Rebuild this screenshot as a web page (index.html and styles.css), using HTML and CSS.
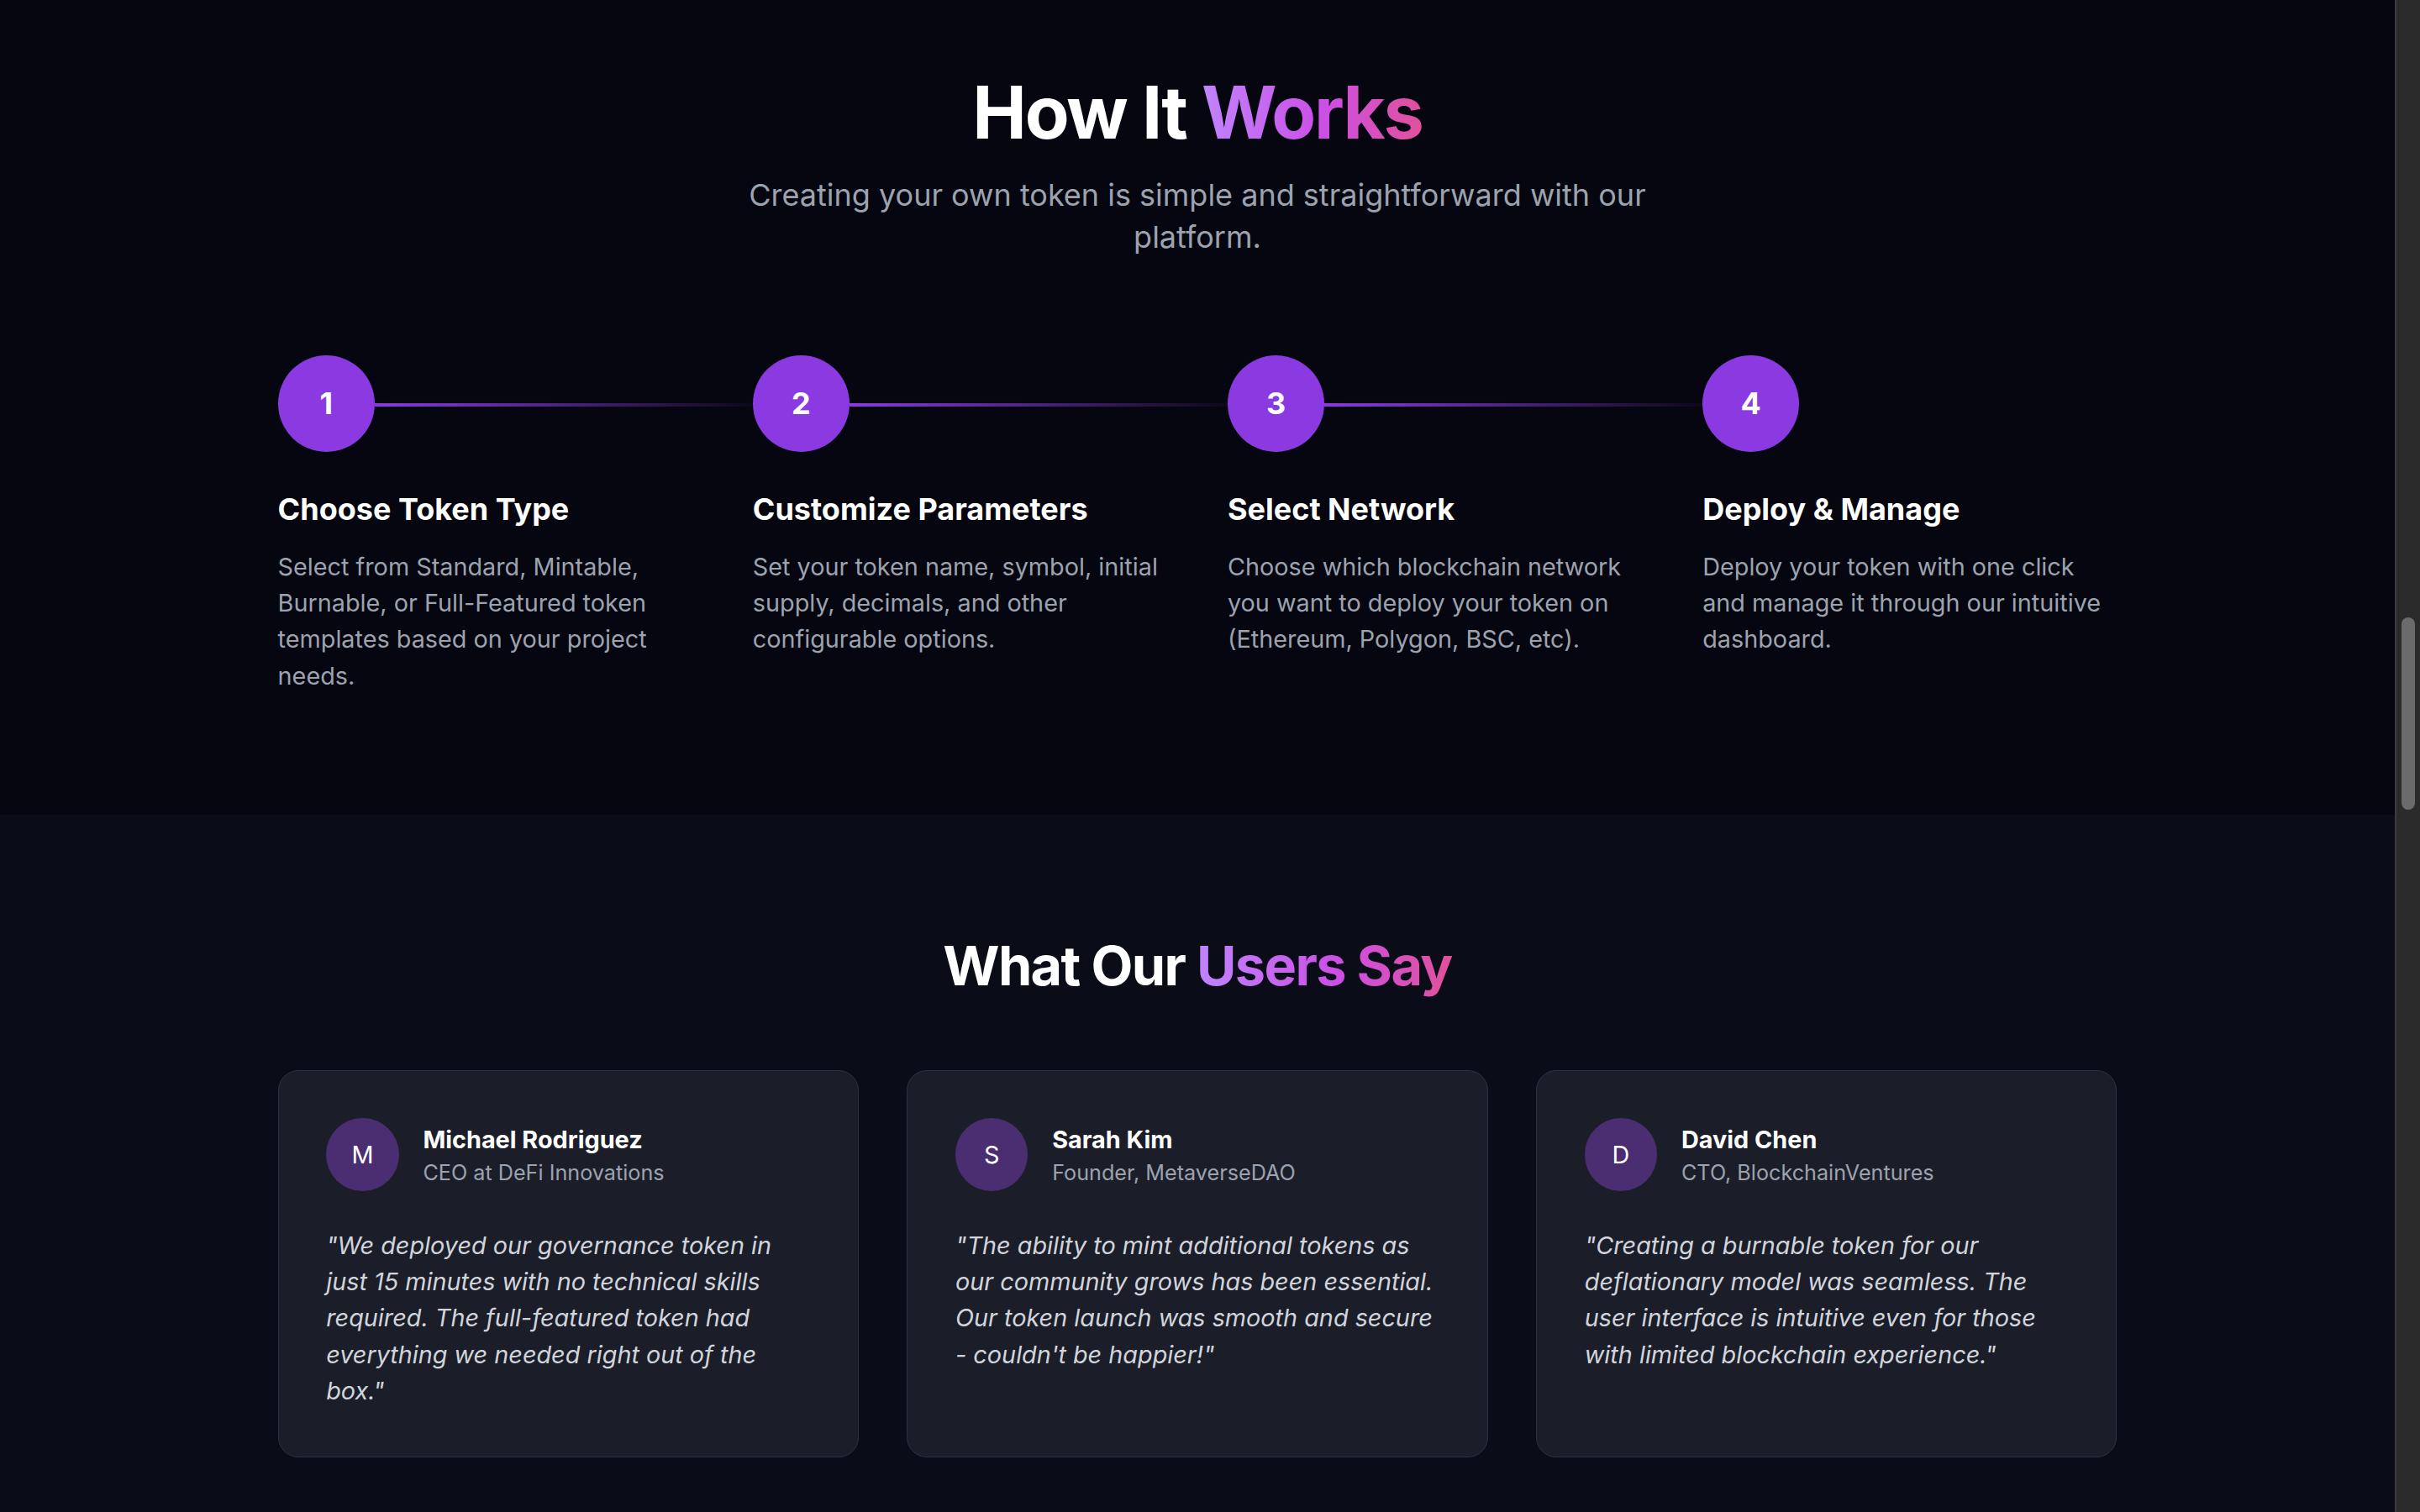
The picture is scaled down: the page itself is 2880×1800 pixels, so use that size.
FILE: index.html
```html
<!DOCTYPE html>
<html lang="en">
<head>
<meta charset="utf-8">
<title>How It Works</title>
<link rel="stylesheet" href="styles.css">
</head>
<body>
<div class="page">
  <main class="main">
    <section class="how">
      <div class="container">
        <h2 class="how-title">How It <span class="grad">Works</span></h2>
        <p class="how-sub">Creating your own token is simple and straightforward with our platform.</p>
        <div class="steps">
          <div class="step">
            <div class="step-head"><div class="step-num">1</div><div class="step-line"></div></div>
            <h3 class="step-title">Choose Token Type</h3>
            <p class="step-desc">Select from Standard, Mintable, Burnable, or Full-Featured token templates based on your project needs.</p>
          </div>
          <div class="step">
            <div class="step-head"><div class="step-num">2</div><div class="step-line"></div></div>
            <h3 class="step-title">Customize Parameters</h3>
            <p class="step-desc">Set your token name, symbol, initial supply, decimals, and other configurable options.</p>
          </div>
          <div class="step">
            <div class="step-head"><div class="step-num">3</div><div class="step-line"></div></div>
            <h3 class="step-title">Select Network</h3>
            <p class="step-desc">Choose which blockchain network you want to deploy your token on (Ethereum, Polygon, BSC, etc).</p>
          </div>
          <div class="step">
            <div class="step-head"><div class="step-num">4</div></div>
            <h3 class="step-title">Deploy &amp; Manage</h3>
            <p class="step-desc">Deploy your token with one click and manage it through our intuitive dashboard.</p>
          </div>
        </div>
      </div>
    </section>
    <section class="users">
      <div class="container">
        <h2 class="users-title">What Our <span class="grad">Users Say</span></h2>
        <div class="cards">
          <div class="card">
            <div class="card-head">
              <div class="avatar">M</div>
              <div class="who">
                <div class="name">Michael Rodriguez</div>
                <div class="role">CEO at DeFi Innovations</div>
              </div>
            </div>
            <p class="quote">"We deployed our governance token in just 15 minutes with no technical skills required. The full-featured token had everything we needed right out of the box."</p>
          </div>
          <div class="card">
            <div class="card-head">
              <div class="avatar">S</div>
              <div class="who">
                <div class="name">Sarah Kim</div>
                <div class="role">Founder, MetaverseDAO</div>
              </div>
            </div>
            <p class="quote">"The ability to mint additional tokens as our community grows has been essential. Our token launch was smooth and secure - couldn't be happier!"</p>
          </div>
          <div class="card">
            <div class="card-head">
              <div class="avatar">D</div>
              <div class="who">
                <div class="name">David Chen</div>
                <div class="role">CTO, BlockchainVentures</div>
              </div>
            </div>
            <p class="quote">"Creating a burnable token for our deflationary model was seamless. The user interface is intuitive even for those with limited blockchain experience."</p>
          </div>
        </div>
      </div>
    </section>
  </main>
  <aside class="scrollbar"><div class="scroll-space"></div><div class="scroll-thumb"></div></aside>
</div>
</body>
</html>
```
FILE: styles.css
```css
html, body {
  margin: 0;
  padding: 0;
  height: 100%;
  overflow: hidden;
  background: #05060f;
}
body {
  font-family: Inter, "Noto Sans", "Liberation Sans", sans-serif;
  color: #fff;
}
.page {
  display: flex;
  height: 1800px;
}
.main {
  flex: 1;
  min-width: 0;
  overflow: hidden;
}
.container {
  max-width: 2188.8px;
  margin: 0 auto;
}
.how {
  background: #05060f;
  padding: 91.4px 0 144px;
}
.how-title {
  margin: 0 0 28.8px;
  text-align: center;
  font-size: 86.4px;
  line-height: 86.4px;
  font-weight: 700;
  letter-spacing: -0.025em;
  color: #fff;
}
.grad {
  background: linear-gradient(90deg, #c084fc 0%, #cc4fe6 55%, #e0519a 100%);
  -webkit-background-clip: text;
  background-clip: text;
  color: transparent;
}
.how-sub {
  margin: 0 auto 115.2px;
  max-width: 1209.6px;
  text-align: center;
  font-size: 36px;
  line-height: 50.4px;
  color: #9ca3af;
}
.steps {
  display: grid;
  grid-template-columns: repeat(4, 1fr);
  column-gap: 72px;
}
.step-head {
  display: flex;
  align-items: flex-start;
  margin-bottom: 43.2px;
}
.step-num {
  flex: none;
  width: 115.2px;
  height: 115.2px;
  border-radius: 50%;
  background: #8a3ae0;
  display: flex;
  align-items: center;
  justify-content: center;
  font-size: 36px;
  font-weight: 700;
  color: #fff;
}
.step-line {
  flex: 1;
  height: 3.6px;
  margin-top: 57.6px;
  margin-right: -72px;
  background: linear-gradient(90deg, #8a3ae0 0%, rgba(138, 58, 224, 0.05) 100%);
}
.step-title {
  margin: 0 0 21.6px;
  font-size: 36px;
  line-height: 50.4px;
  font-weight: 700;
  color: #fff;
}
.step-desc {
  margin: 0;
  font-size: 28.8px;
  line-height: 43.2px;
  color: #9ca3af;
}
.users {
  background: #0a0d18;
  padding: 144px 0 144px;
}
.users-title {
  margin: 0 0 88px;
  text-align: center;
  font-size: 64.8px;
  line-height: 72px;
  font-weight: 700;
  letter-spacing: -0.025em;
  color: #fff;
}
.cards {
  display: grid;
  grid-template-columns: repeat(3, 1fr);
  column-gap: 57.6px;
}
.card {
  background: #1b1e29;
  border: 1.8px solid #2d3242;
  border-radius: 24px;
  padding: 56.6px;
}
.card-head {
  display: flex;
  align-items: center;
  margin-bottom: 43.2px;
}
.avatar {
  flex: none;
  width: 86.4px;
  height: 86.4px;
  border-radius: 50%;
  background: #4b2d72;
  display: flex;
  align-items: center;
  justify-content: center;
  font-size: 28.8px;
  color: #fff;
}
.who {
  margin-left: 28.8px;
}
.name {
  font-size: 28.8px;
  line-height: 43.2px;
  font-weight: 700;
  color: #fff;
}
.role {
  font-size: 25.2px;
  line-height: 36px;
  color: #9ca3af;
}
.quote {
  margin: 0;
  font-size: 28.8px;
  line-height: 43.2px;
  font-style: italic;
  color: #d1d5db;
}
.scrollbar {
  flex: none;
  width: 28px;
  height: 1800px;
  background: #2b2b2b;
  border-left: 2px solid #3c3c3c;
  display: flex;
  flex-direction: column;
  align-items: center;
}
.scroll-space {
  height: 735px;
  flex: none;
}
.scroll-thumb {
  width: 16px;
  height: 229px;
  border-radius: 8px;
  background: #6b6b6b;
}
```
